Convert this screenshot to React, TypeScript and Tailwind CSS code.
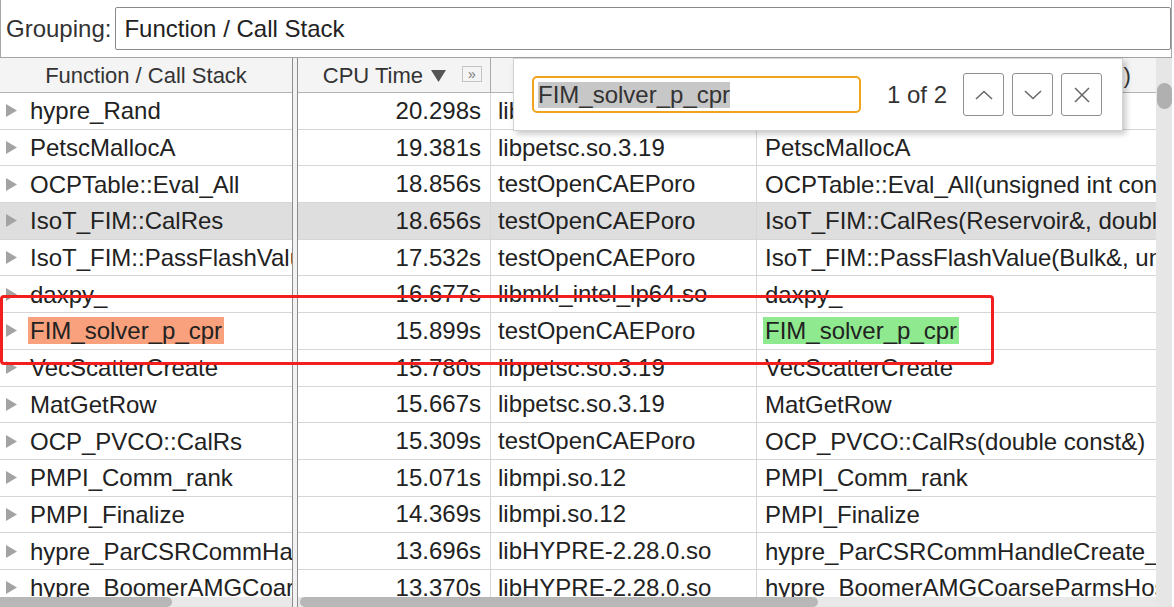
import React from 'react';

type Row = {
  name: string;
  time: string;
  module: string;
  full: string;
  selected?: boolean;
  match?: boolean;
};

const rows: Row[] = [
  { name: 'hypre_Rand', time: '20.298s', module: 'libHYPRE-2.28.0.so', full: 'hypre_Rand' },
  { name: 'PetscMallocA', time: '19.381s', module: 'libpetsc.so.3.19', full: 'PetscMallocA' },
  { name: 'OCPTable::Eval_All', time: '18.856s', module: 'testOpenCAEPoro', full: 'OCPTable::Eval_All(unsigned int const&, double const&)' },
  { name: 'IsoT_FIM::CalRes', time: '18.656s', module: 'testOpenCAEPoro', full: 'IsoT_FIM::CalRes(Reservoir&, double const&, bool)', selected: true },
  { name: 'IsoT_FIM::PassFlashValue', time: '17.532s', module: 'testOpenCAEPoro', full: 'IsoT_FIM::PassFlashValue(Bulk&, unsigned int const&)' },
  { name: 'daxpy_', time: '16.677s', module: 'libmkl_intel_lp64.so', full: 'daxpy_' },
  { name: 'FIM_solver_p_cpr', time: '15.899s', module: 'testOpenCAEPoro', full: 'FIM_solver_p_cpr', match: true },
  { name: 'VecScatterCreate', time: '15.780s', module: 'libpetsc.so.3.19', full: 'VecScatterCreate' },
  { name: 'MatGetRow', time: '15.667s', module: 'libpetsc.so.3.19', full: 'MatGetRow' },
  { name: 'OCP_PVCO::CalRs', time: '15.309s', module: 'testOpenCAEPoro', full: 'OCP_PVCO::CalRs(double const&)' },
  { name: 'PMPI_Comm_rank', time: '15.071s', module: 'libmpi.so.12', full: 'PMPI_Comm_rank' },
  { name: 'PMPI_Finalize', time: '14.369s', module: 'libmpi.so.12', full: 'PMPI_Finalize' },
  { name: 'hypre_ParCSRCommHandleCreate', time: '13.696s', module: 'libHYPRE-2.28.0.so', full: 'hypre_ParCSRCommHandleCreate_v2' },
  { name: 'hypre_BoomerAMGCoarseParms', time: '13.370s', module: 'libHYPRE-2.28.0.so', full: 'hypre_BoomerAMGCoarseParmsHost' },
];

function Expander() {
  return (
    <svg width="13" height="15" viewBox="0 0 13 15" className="shrink-0">
      <polygon points="1,1 12,7.5 1,14" fill="#a3a3a3" />
    </svg>
  );
}

export default function App() {
  return (
    <div className="relative w-[1174px] h-[607px] overflow-hidden bg-white text-[#222] font-['Liberation_Sans',Arial,sans-serif]">
      {/* grouping bar */}
      <div className="w-[1172px] h-[57px] border-x border-[#a6a6a6] flex items-center gap-[4px] pl-[5px]">
        <span className="text-[24px] text-[#333] leading-none">Grouping:</span>
        <div className="flex-1 h-[43px] border border-[#8a8a8a] rounded-[2px] flex items-center pl-[8px] text-[24px] leading-none">
          Function / Call Stack
        </div>
      </div>

      {/* table */}
      <div className="w-[1172px] h-[550px] border-t border-[#a3a3a3] flex">
        {/* left pane */}
        <div className="w-[292px] flex flex-col">
          <div className="h-[35px] bg-[#f4f4f4] border-b border-[#b3b3b3] flex items-center justify-center text-[22px] text-[#333]">
            Function / Call Stack
          </div>
          <div className="flex-1 overflow-hidden">
            {rows.map((r) => (
              <div
                key={r.name}
                className={`h-[36.7px] border-b border-[#d6d6d6] flex items-center pl-[5px] gap-[12px] whitespace-nowrap overflow-hidden text-[24px] ${r.selected ? 'bg-[#dedede]' : ''}`}
              >
                <Expander />
                <span className={r.match ? 'bg-[#f9a07d] px-[2px] -ml-[2px] leading-[27px]' : 'leading-[27px]'}>{r.name}</span>
              </div>
            ))}
          </div>
          <div className="h-[10px] bg-[#e8e8e8] flex">
            <div className="w-[172px] h-full bg-[#b7b7b7] rounded-r-full" />
          </div>
        </div>

        {/* splitter */}
        <div className="w-[6px] border-x border-[#8d8d8d] bg-[#f2f2f2]" />

        {/* right pane */}
        <div className="flex-1 flex flex-col min-w-0">
          <div className="flex-1 flex min-h-0">
            <div className="flex-1 overflow-hidden min-w-0">
              <div className="h-[35px] bg-[#f4f4f4] border-b border-[#b3b3b3] flex text-[22px] text-[#333] w-[1100px]">
                <div className="w-[193px] shrink-0 border-r border-[#a8a8a8] flex items-center justify-end pr-[8px]">
                  <span>CPU Time</span>
                  <svg width="15" height="12" viewBox="0 0 15 12" className="ml-[8px] mt-[1px]">
                    <polygon points="0,0 15,0 7.5,12" fill="#555" />
                  </svg>
                  <div className="ml-[16px] -mt-[3px] w-[20px] h-[16px] border border-[#c4c4c4] flex items-center justify-center text-[14px] leading-none text-[#777]">
                    »
                  </div>
                </div>
                <div className="w-[266px] shrink-0 border-r border-[#a8a8a8] flex items-center justify-center">Module</div>
                <div className="w-[607px] shrink-0 flex items-center justify-center">Function (Full)</div>
              </div>
              {rows.map((r) => (
                <div
                  key={r.name}
                  className={`h-[36.7px] border-b border-[#d6d6d6] flex text-[24px] whitespace-nowrap w-[1100px] ${r.selected ? 'bg-[#dedede]' : ''}`}
                >
                  <div className="w-[193px] shrink-0 border-r border-[#d6d6d6] flex items-center justify-end pr-[9px]">{r.time}</div>
                  <div className="w-[266px] shrink-0 border-r border-[#d6d6d6] flex items-center pl-[7px] overflow-hidden">{r.module}</div>
                  <div className="w-[607px] shrink-0 flex items-center pl-[6px] overflow-hidden">
                    <span className={r.match ? 'bg-[#8fe98f] px-[2px] leading-[27px]' : 'px-[2px] leading-[27px]'}>{r.full}</span>
                  </div>
                </div>
              ))}
            </div>
            {/* vertical scrollbar */}
            <div className="w-[16px] bg-[#e6e6e6] pt-[25px] flex justify-center">
              <div className="w-[15px] h-[26px] rounded-full bg-[#b0b0b0]" />
            </div>
          </div>
          <div className="h-[10px] flex">
            <div className="flex-1 bg-[#e8e8e8] pl-[2px]">
              <div className="w-[518px] h-full bg-[#b7b7b7] rounded-full" />
            </div>
            <div className="w-[16px] bg-[#e6e6e6]" />
          </div>
        </div>
      </div>

      {/* find popup */}
      <div className="absolute left-[513px] top-[58px] w-[610px] h-[73px] bg-white border border-[#d2d2d2] shadow-[3px_3px_6px_rgba(0,0,0,0.22)] flex items-center pl-[18px]">
        <div className="w-[329px] h-[37px] border-2 border-[#efa41c] rounded-[5px] flex items-center pl-[4px]">
          <span className="bg-[#c7c7c7] text-[24px] leading-[26px] text-[#333]">FIM_solver_p_cpr</span>
        </div>
        <span className="ml-[26px] text-[24px] text-[#333]">1 of 2</span>
        <div className="ml-[16px] flex gap-[8px]">
          <button className="w-[41px] h-[43px] border border-[#8f8f8f] rounded-[3px] bg-white flex items-center justify-center">
            <svg width="18" height="10" viewBox="0 0 18 10" fill="none" stroke="#6a6a6a" strokeWidth="1.6">
              <polyline points="1,9 9,1.5 17,9" />
            </svg>
          </button>
          <button className="w-[41px] h-[43px] border border-[#8f8f8f] rounded-[3px] bg-white flex items-center justify-center">
            <svg width="18" height="10" viewBox="0 0 18 10" fill="none" stroke="#6a6a6a" strokeWidth="1.6">
              <polyline points="1,1 9,8.5 17,1" />
            </svg>
          </button>
          <button className="w-[41px] h-[43px] border border-[#8f8f8f] rounded-[3px] bg-white flex items-center justify-center">
            <svg width="16" height="16" viewBox="0 0 16 16" fill="none" stroke="#6a6a6a" strokeWidth="1.6">
              <line x1="1" y1="1" x2="15" y2="15" />
              <line x1="15" y1="1" x2="1" y2="15" />
            </svg>
          </button>
        </div>
      </div>

      {/* annotation box */}
      <div className="absolute left-0 top-[295px] w-[994px] h-[70px] border-[3px] border-[#f31e1e] rounded-[4px]" />
    </div>
  );
}
